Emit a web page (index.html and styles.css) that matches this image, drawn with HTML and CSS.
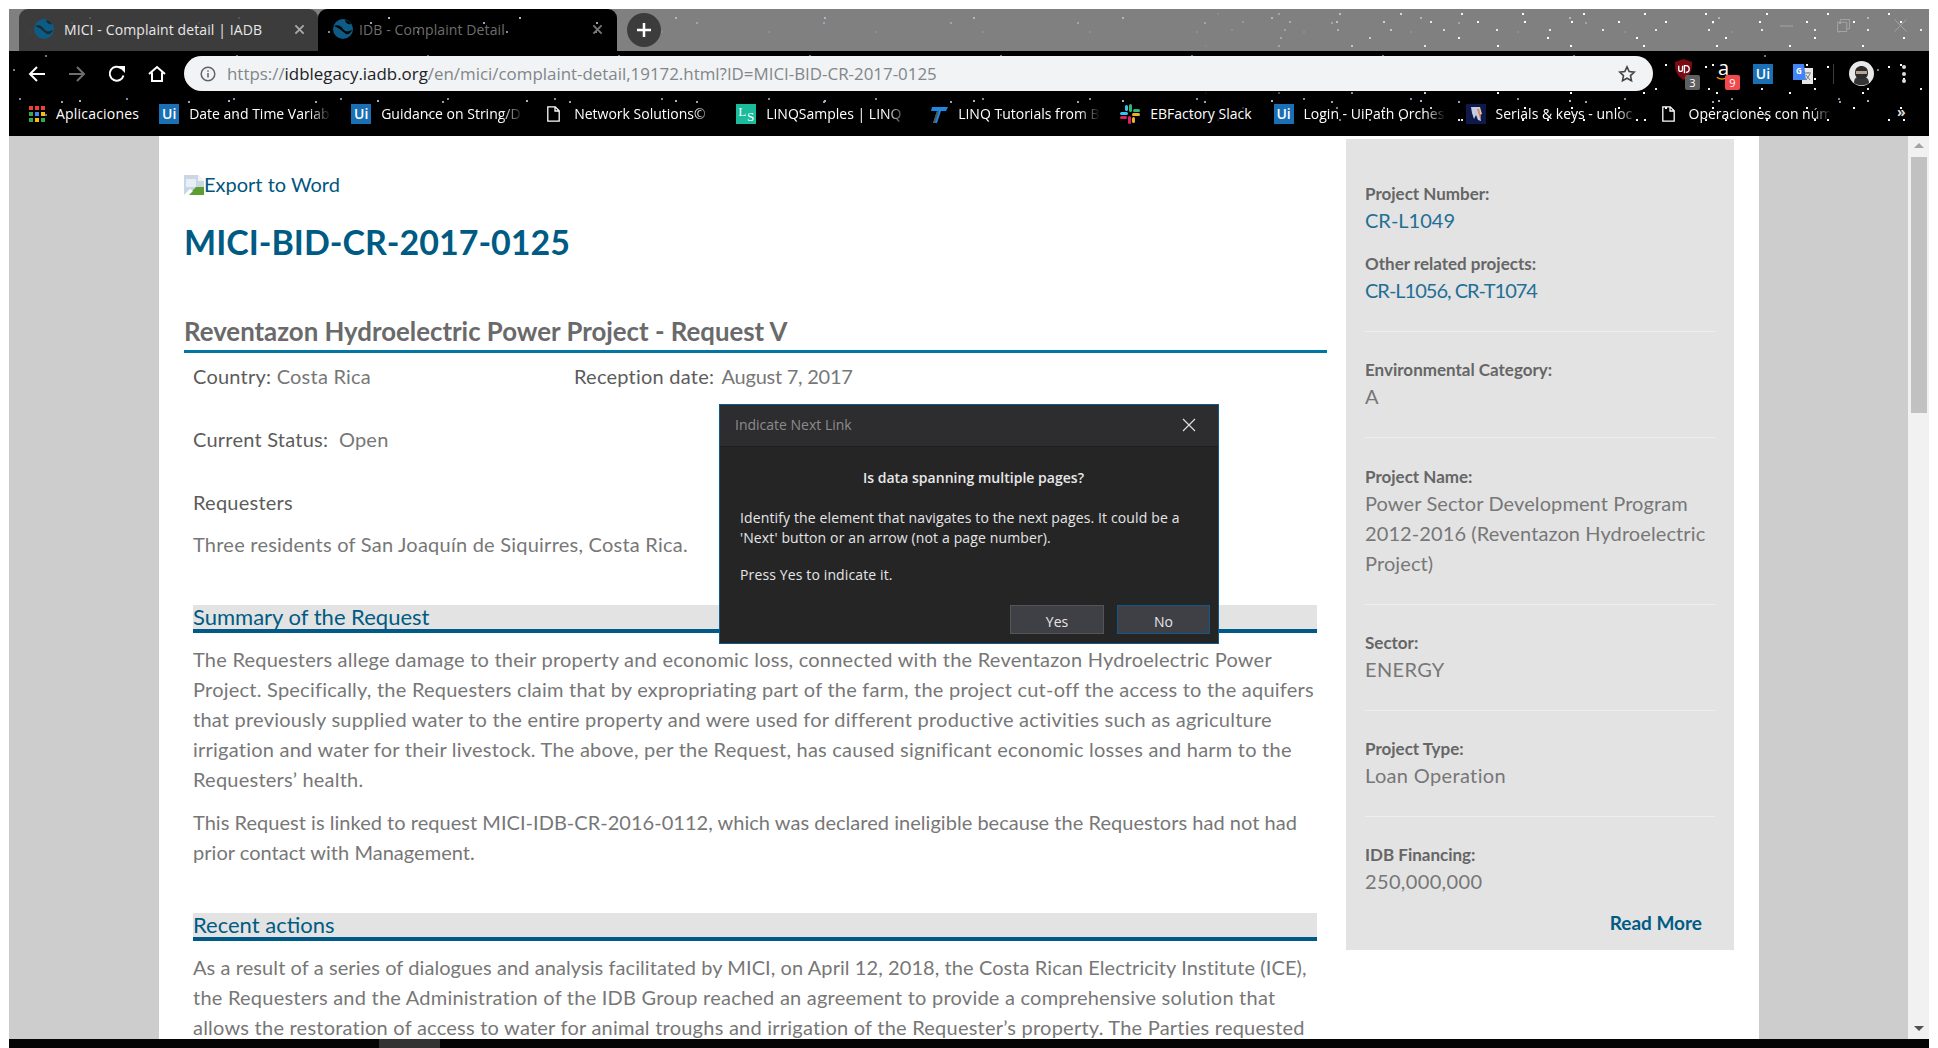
FILE: index.html
```html
<!DOCTYPE html>
<html lang="en">
<head>
<meta charset="utf-8">
<title>MICI - Complaint detail | IADB</title>
<link rel="stylesheet" href="styles.css">
</head>
<body>
<div class="window">
  <header class="chrome stars">
    <div class="dense"></div>
    <div class="tabstrip">
      <div class="tab tab-bg stars">
        <svg class="favicon" viewBox="0 0 20 20"><circle cx="10" cy="10" r="10" fill="#0d5c86"/><path d="M1 7c4-2 7 0 9 3s5 3 9 1c-1 3-4 5-6 4-3-2-5-5-12-8zM12 1c2 0 4 1 6 4-2 1-5 0-6-4z" fill="#1d2b33"/></svg>
        <span class="tab-title">MICI - Complaint detail | IADB</span>
        <svg class="tab-x" viewBox="0 0 12 12"><path d="M1.5 1.5l9 9M10.5 1.5l-9 9"/></svg>
      </div>
      <div class="tab tab-active stars">
        <svg class="favicon" viewBox="0 0 20 20"><circle cx="10" cy="10" r="10" fill="#0d5c86"/><path d="M1 7c4-2 7 0 9 3s5 3 9 1c-1 3-4 5-6 4-3-2-5-5-12-8zM12 1c2 0 4 1 6 4-2 1-5 0-6-4z" fill="#000"/></svg>
        <span class="tab-title dim">IDB - Complaint Detail</span>
        <svg class="tab-x" viewBox="0 0 12 12"><path d="M1.5 1.5l9 9M10.5 1.5l-9 9"/></svg>
      </div>
      <div class="newtab"><svg viewBox="0 0 16 16"><path d="M8 1v14M1 8h14"/></svg></div>
      <div class="winctl">
        <svg class="w-min" viewBox="0 0 13 2"><path d="M0 1h13"/></svg>
        <svg class="w-max" viewBox="0 0 14 14"><path d="M.5 3.5h10v10H.5zM3.5 3V.5h10v10H11"/></svg>
        <svg class="w-close" viewBox="0 0 14 14"><path d="M.5.5l13 13M13.5.5l-13 13"/></svg>
      </div>
    </div>
    <div class="toolbar">
      <div class="navbtn"><svg viewBox="0 0 18 18"><path class="w" d="M17 9H2M9 2L2 9l7 7"/></svg></div>
      <div class="navbtn"><svg viewBox="0 0 18 18"><path class="g" d="M1 9h15M9 2l7 7-7 7"/></svg></div>
      <div class="navbtn"><svg viewBox="0 0 18 18"><path class="w" d="M15.5 10.5A7 7 0 1 1 13.5 3.5"/><path class="wf" d="M10 1h7v7z"/></svg></div>
      <div class="navbtn"><svg viewBox="0 0 18 18"><path class="w" d="M1 9l8-7 8 7M4 7.5V16h10V7.5"/></svg></div>
      <div class="urlbar">
        <svg class="info" viewBox="0 0 16 16"><circle cx="8" cy="8" r="6.8"/><path d="M8 7v4.5M8 4.2v1.6"/></svg>
        <span class="url"><span class="url-dim">https://</span>idblegacy.iadb.org<span class="url-dim">/en/mici/complaint-detail,19172.html?ID=MICI-BID-CR-2017-0125</span></span>
        <svg class="bookmark-star" viewBox="0 0 18 18"><path d="M9 1.8l2.2 4.7 5.1.6-3.8 3.5 1 5.1L9 13.2l-4.5 2.5 1-5.1L1.7 7.100l5.100-.6z"/></svg>
      </div>
      <div class="exts">
        <div class="ext ublock">
          <svg viewBox="0 0 20 22"><path d="M10 0l9 3c0 8-1 14-9 19C2 17 1 11 1 3z" fill="#7a0b12"/><path d="M5 7v4a2 2 0 0 0 4 0V7M11 15V7h1.500a3 3 0 0 1 0 7" fill="none" stroke="#fff" stroke-width="1.400"/></svg>
          <span class="badge badge-gray">3</span>
        </div>
        <div class="ext amazon">
          <span class="amazon-a">a</span>
          <svg class="amazon-smile" viewBox="0 0 14 5"><path d="M1 1c4 3 8 3 12 0" fill="none" stroke="#f90" stroke-width="1.500"/></svg>
          <span class="badge badge-red">9</span>
        </div>
        <div class="ui-logo">Ui</div>
        <div class="ext translate">
          <svg viewBox="0 0 20 20"><path d="M9 4h11v16H9z" fill="#e8e8e8"/><path d="M12 9h6M15 8v1M13 16l4-6M13 11l4 5" stroke="#777" fill="none"/><path d="M0 0h11l2 16H0z" fill="#4285f4"/><text x="3" y="10" class="gt">G</text></svg>
        </div>
        <div class="sep"></div>
        <div class="avatar">
          <svg viewBox="0 0 25 25"><circle cx="12.500" cy="12.500" r="12.500" fill="#e8e8e8"/><path d="M5 22c0-5 3-7 7-7s8 2 8 7c-4 3-11 3-15 0z" fill="#333"/><path d="M6 12c0-5 3-7 6.500-7S19 7 19 12c0 4-3 6-6.500 6S6 16 6 12z" fill="#2b2b2b"/><path d="M7 10h11v3H7z" fill="#b9a58f"/></svg>
        </div>
        <div class="kebab"><i></i><i></i><i></i></div>
      </div>
    </div>
    <nav class="bookmarks">
      <div class="bm bm-apps">
        <svg class="bm-icon apps" viewBox="0 0 16 16">
          <path fill="#ea4335" d="M0 0h4v4H0zM6 0h4v4H6zM12 0h4v4h-4z"/>
          <path fill="#34a853" d="M0 6h4v4H0z"/><path fill="#4285f4" d="M6 6h4v4H6z"/><path fill="#fbbc05" d="M12 6h4v4h-4z"/>
          <path fill="#34a853" d="M0 12h4v4H0z"/><path fill="#fbbc05" d="M6 12h4v4H6z"/><path fill="#34a853" d="M12 12h4v4h-4z"/>
        </svg>
        <span class="bm-text plain apps-text">Aplicaciones</span>
      </div>
      <div class="bm"><div class="ui-logo">Ui</div><span class="bm-text">Date and Time Variab</span></div>
      <div class="bm"><div class="ui-logo">Ui</div><span class="bm-text">Guidance on String/D</span></div>
      <div class="bm bm-doc"><svg class="doc" viewBox="0 0 13 16"><path d="M.8.800h7.400l4 4V15.200H.8zM8 1v4h4"/></svg><span class="bm-text">Network Solutions©</span></div>
      <div class="bm"><div class="ls-logo"><span>L</span><span class="ls-s">S</span></div><span class="bm-text">LINQSamples | LINQ</span></div>
      <div class="bm"><svg class="bm-icon" viewBox="0 0 20 20"><path d="M4 3h16l-2 4h-5l-4 12H5l4-12H3z" fill="#1e88e5"/><path d="M9 7l-4 12h2l4-12z" fill="#555"/></svg><span class="bm-text">LINQ Tutorials from B</span></div>
      <div class="bm"><svg class="bm-icon" viewBox="0 0 20 20"><rect x="0" y="8" width="8" height="3" rx="1.500" fill="#36c5f0"/><rect x="5" y="1" width="3" height="6" rx="1.500" fill="#36c5f0"/><rect x="9" y="0" width="3" height="8" rx="1.500" fill="#2eb67d"/><rect x="13" y="5" width="7" height="3" rx="1.500" fill="#2eb67d"/><rect x="12" y="9" width="8" height="3" rx="1.500" fill="#ecb22e"/><rect x="12" y="13" width="3" height="6" rx="1.500" fill="#ecb22e"/><rect x="8" y="12" width="3" height="8" rx="1.500" fill="#e01e5a"/><rect x="0" y="12" width="7" height="3" rx="1.500" fill="#e01e5a"/></svg><span class="bm-text plain">EBFactory Slack</span></div>
      <div class="bm"><div class="ui-logo">Ui</div><span class="bm-text">Login - UiPath Orches</span></div>
      <div class="bm"><svg class="bm-icon" viewBox="0 0 20 20"><path d="M0 0h20v20H0z" fill="#101a4a"/><path d="M5 3h9l2 7-2 1 1 6-3-1-2-5-2 4-2-6z" fill="#c5cbe0"/><path d="M11 5l3 9 1-1-2-8z" fill="#e8842c"/></svg><span class="bm-text">Serials &amp; keys - unloc</span></div>
      <div class="bm bm-doc"><svg class="doc" viewBox="0 0 13 16"><path d="M.8.800h7.400l4 4V15.200H.8zM8 1v4h4"/></svg><span class="bm-text">Operaciones con núm</span></div>
      <span class="more">»</span>
    </nav>
  </header>

  <div class="viewport">
    <div class="gutter"></div>
    <main class="page">
      <article class="article">
        <a class="export">
          <svg class="broken" viewBox="0 0 20 20"><path d="M0 0h14l6 6v14H0z" fill="#c9d6e6"/><path d="M14 0l6 6h-6z" fill="#f2f2f2"/><path d="M2 4h10v8H2z" fill="#e9eef5"/><path d="M4 20l8-8 8 0v8z" fill="#5c9e31"/><path d="M0 20l6-6 3 2-4 4z" fill="#fff"/></svg>Export to Word
        </a>
        <h1 class="code">MICI-BID-CR-2017-0125</h1>
        <h2 class="project">Reventazon Hydroelectric Power Project - Request V</h2>
        <div class="body">
          <p class="meta-row"><span class="meta-a"><b>Country:</b> Costa Rica</span><span><b>Reception date:</b> <span class="date">August 7, 2017</span></span></p>
          <p class="meta-row gap"><span><b>Current Status:</b>&nbsp; Open</span></p>
          <p class="meta-row gap"><b>Requesters</b></p>
          <p class="para lead">Three residents of San Joaquín de Siquirres, Costa Rica.</p>
          <h3 class="section">Summary of the Request</h3>
          <p class="para first">The Requesters allege damage to their property and economic loss, connected with the Reventazon Hydroelectric Power<br>Project. Specifically, the Requesters claim that by expropriating part of the farm, the project cut-off the access to the aquifers<br>that previously supplied water to the entire property and were used for different productive activities such as agriculture<br>irrigation and water for their livestock. The above, per the Request, has caused significant economic losses and harm to the<br>Requesters’ health.</p>
          <p class="para next">This Request is linked to request MICI-IDB-CR-2016-0112, which was declared ineligible because the Requestors had not had<br>prior contact with Management.</p>
          <h3 class="section">Recent actions</h3>
          <p class="para first"><span class="fit">As a result of a series of dialogues and analysis facilitated by MICI, on April 12, 2018, the Costa Rican Electricity Institute (ICE),</span><br>the Requesters and the Administration of the IDB Group reached an agreement to provide a comprehensive solution that<br>allows the restoration of access to water for animal troughs and irrigation of the Requester’s property. The Parties requested</p>
        </div>
      </article>
      <aside class="side">
        <div class="group first-group">
          <div class="label">Project Number:</div>
          <div class="value link">CR-L1049</div>
          <div class="label spaced">Other related projects:</div>
          <div class="value link tight">CR-L1056, CR-T1074</div>
        </div>
        <div class="group"><div class="label">Environmental Category:</div><div class="value">A</div></div>
        <div class="group"><div class="label">Project Name:</div><div class="value name">Power Sector Development Program<br>2012-2016 (Reventazon Hydroelectric<br>Project)</div></div>
        <div class="group"><div class="label">Sector:</div><div class="value">ENERGY</div></div>
        <div class="group"><div class="label">Project Type:</div><div class="value">Loan Operation</div></div>
        <div class="group last"><div class="label">IDB Financing:</div><div class="value">250,000,000</div></div>
        <a class="readmore">Read More</a>
      </aside>
    </main>
    <div class="gutter right"></div>
    <div class="scrollbar">
      <span class="arrow up"></span>
      <div class="thumb"></div>
      <span class="arrow down"></span>
    </div>
  </div>

  <footer class="taskbar">
    <div class="task-btn"></div>
    <span class="clock">1:09 PM</span>
  </footer>

  <section class="dialog">
    <div class="dlg-title">
      <span>Indicate Next Link</span>
      <svg viewBox="0 0 14 14"><path d="M1 1l12 12M13 1L1 13"/></svg>
    </div>
    <div class="dlg-body">
      <p class="dlg-head">Is data spanning multiple pages?</p>
      <p class="dlg-text">Identify the element that navigates to the next pages. It could be a<br>'Next' button or an arrow (not a page number).</p>
      <p class="dlg-text press">Press Yes to indicate it.</p>
      <div class="dlg-actions">
        <button class="btn">Yes</button>
        <button class="btn btn-default">No</button>
      </div>
    </div>
  </section>
</div>
</body>
</html>
```

FILE: styles.css
```css
:root {
  --stars:
    radial-gradient(circle at 11px 23px, #7f8fa8 0 .7px, transparent 1.1px),
    radial-gradient(circle at 71px 9px, #a9b6cc 0 .7px, transparent 1.1px),
    radial-gradient(circle at 37px 47px, #66748c 0 .8px, transparent 1.1px),
    radial-gradient(circle at 93px 31px, #c4cfe0 0 .6px, transparent 1px),
    radial-gradient(circle at 5px 61px, #73829b 0 .7px, transparent 1.1px),
    radial-gradient(circle at 53px 14px, #97a5bd 0 .7px, transparent 1.1px);
  --dense:
    radial-gradient(circle at 7px 13px, #fff 0 1px, transparent 1.4px),
    radial-gradient(circle at 29px 5px, #fff 0 .8px, transparent 1.2px),
    radial-gradient(circle at 17px 37px, #fff 0 1px, transparent 1.4px),
    radial-gradient(circle at 43px 21px, #dfe8f5 0 .8px, transparent 1.2px),
    radial-gradient(circle at 3px 29px, #fff 0 .9px, transparent 1.2px),
    radial-gradient(circle at 37px 41px, #fff 0 .8px, transparent 1.2px);
}

* { box-sizing: border-box; }

html, body { margin: 0; padding: 0; height: 1048px; overflow: hidden; background: #fff; }

body { padding: 9px 9px 0; font-family: "Lato", "Open Sans", sans-serif; color: #666; }

p, h1, h2, h3 { margin: 0; font-weight: normal; }

.window { position: relative; width: 1920px; height: 1039px; display: flex; flex-direction: column; overflow: hidden; }

/* browser chrome */
.chrome { position: relative; flex: 0 0 127px; background-color: #000; background-image: var(--stars), linear-gradient(#808080 42px, #000 42px); background-size: 107px 67px, 149px 83px, 191px 59px, 83px 71px, 233px 97px, 127px 79px, 100% 100%; font-family: "Open Sans", "Noto Sans", sans-serif; }

.stars { background-repeat: repeat; }

.dense { position: absolute; left: 1180px; top: 0; right: 0; bottom: 0; background-image: var(--dense); background-size: 47px 43px, 61px 53px, 73px 47px, 53px 59px, 89px 41px, 67px 37px; -webkit-mask-image: linear-gradient(90deg, transparent, #000 300px); mask-image: linear-gradient(90deg, transparent, #000 300px); }

.tabstrip { position: relative; height: 42px; display: flex; align-items: stretch; padding-left: 10px; }

.tab { width: 299px; display: flex; align-items: center; padding-bottom: 2px; border-radius: 9px 9px 0 0; font-size: 14px; color: #e8e8e8; white-space: nowrap; }

.tab-bg { background-color: #3c3c3c; background-image: var(--stars); background-size: 107px 67px, 149px 83px, 191px 59px, 83px 71px, 233px 97px, 127px 79px; background-blend-mode: soft-light; padding-left: 15px; }

.tab-active { background-color: #000; background-image: var(--stars); background-size: 89px 71px, 131px 61px, 173px 53px, 79px 83px, 211px 67px, 113px 59px; padding-left: 15px; }

.favicon { width: 20px; height: 20px; flex: none; }

.tab-title { margin-left: 10px; width: 224.500px; overflow: hidden; letter-spacing: .1px; }

.tab-title.dim { color: #6e6e6e; margin-left: 6px; width: 227.500px; }

.tab-x { width: 11px; height: 11px; flex: none; margin-left: 5px; }

.tab-x path { stroke: #aaa; stroke-width: 2; fill: none; }

.tab-active .tab-x path { stroke: #777; }

.newtab { width: 34px; height: 34px; margin: 4px 0 0 10px; border-radius: 50%; background: #3c3c3c; display: flex; align-items: center; justify-content: center; }

.newtab svg { width: 16px; height: 16px; }

.newtab path { stroke: #fff; stroke-width: 2.5; fill: none; }

.winctl { position: absolute; right: 22px; top: 10px; display: flex; align-items: center; gap: 44px; }

.winctl svg { width: 13px; height: 13px; fill: none; }

.winctl path { stroke: #a6a6a6; stroke-width: 1; }

.w-min { height: 2px !important; }

.toolbar { position: relative; height: 45px; display: flex; align-items: center; padding-left: 8px; }

.navbtn { width: 40px; display: flex; justify-content: center; }

.navbtn svg { width: 18px; height: 18px; }

.navbtn .w { stroke: #fff; stroke-width: 2; fill: none; }

.navbtn .wf { fill: #fff; }

.navbtn .g { stroke: #6f6f6f; stroke-width: 2; fill: none; }

.urlbar { flex: 1; height: 35px; margin-left: 7px; background: #f1f3f4; border-radius: 18px; display: flex; align-items: center; padding: 0 17px 0 16px; }

.info { width: 16px; height: 16px; flex: none; }

.info circle, .info path { fill: none; stroke: #5f6368; stroke-width: 1.500; }

.url { flex: 1; margin-left: 11px; font-family: "Open Sans", sans-serif; font-size: 16.900px; color: #202124; white-space: nowrap; }

.url-dim { color: #80868b; }

.bookmark-star { width: 18px; height: 18px; flex: none; }

.bookmark-star path { fill: none; stroke: #444; stroke-width: 1.600; }

.exts { flex: 0 0 276px; display: flex; align-items: center; padding-left: 21px; }

.ext { position: relative; flex: none; }

.ublock { width: 26px; height: 26px; }

.ublock svg { width: 19px; height: 21px; position: absolute; left: 0; top: -2px; }

.badge { position: absolute; right: 0; bottom: -3px; width: 15px; height: 15px; border-radius: 2px; color: #fff; font-size: 11px; line-height: 15px; text-align: center; }

.badge-gray { background: #5f5f5f; }

.badge-red { background: #f04a50; }

.amazon { width: 24px; height: 26px; margin-left: 16px; }

.amazon-a { position: absolute; left: 2px; top: -6px; color: #fff; font-size: 20px; line-height: 26px; }

.amazon-smile { position: absolute; left: 0; top: 15px; width: 12px; height: 5px; }

.ui-logo { width: 20px; height: 20px; flex: none; background: #1a6fb5; color: #fff; font-family: "Open Sans", sans-serif; font-weight: 600; font-size: 14px; line-height: 20px; text-align: center; }

.exts .ui-logo { margin-left: 13px; }

.translate { width: 20px; height: 20px; margin-left: 20px; }

.translate svg { display: block; width: 20px; height: 20px; }

.gt { fill: #fff; font-size: 8px; font-weight: 700; font-family: "Open Sans", sans-serif; }

.sep { width: 1px; height: 20px; margin-left: 20px; background: #3c3c3c; }

.avatar { width: 25px; height: 25px; margin-left: 15px; }

.avatar svg { display: block; width: 25px; height: 25px; }

.kebab { margin-left: 28px; display: flex; flex-direction: column; gap: 3px; }

.kebab i { width: 4px; height: 4px; border-radius: 50%; background: #ddd; }

.bookmarks { position: relative; height: 40px; display: flex; align-items: center; padding: 0 0 5px 20px; font-size: 14px; color: #fff; white-space: nowrap; }

.bm { display: flex; align-items: center; flex: none; margin-right: 20px; }

.bm-apps { margin-right: 18px; }

.bm-icon { width: 20px; height: 20px; flex: none; }

.apps { width: 16px; height: 16px; }

.bm-text { margin-left: 10px; width: 142px; overflow: hidden; -webkit-mask-image: linear-gradient(90deg, #000 85%, transparent); mask-image: linear-gradient(90deg, #000 85%, transparent); }

.bm-text.plain { width: auto; overflow: visible; margin-right: 2px; -webkit-mask-image: none; mask-image: none; }

.bm-text.apps-text { margin-left: 11px; letter-spacing: .2px; }

.doc { width: 13px; height: 16px; flex: none; margin-right: 4px; }

.doc path { fill: none; stroke: #fff; stroke-width: 1.300; }

.bm-doc { margin-left: 4px; }

.ls-logo { position: relative; width: 20px; height: 20px; flex: none; background: #1abc9c; color: #fff; font-family: "Liberation Serif", serif; font-size: 13px; line-height: 15px; padding-left: 2px; }

.ls-s { position: absolute; right: 2px; bottom: 0; }

.more { position: absolute; left: 1888px; top: 6px; font-size: 14px; font-weight: 700; color: #ddd; }

/* viewport */
.viewport { flex: 1; display: flex; min-height: 0; overflow: hidden; background: #fff; }

.gutter { flex: 0 0 150px; background: #cdcdcd; }

.gutter.right { flex-basis: 149px; }

.page { flex: 0 0 1600px; display: flex; align-items: flex-start; background: #fff; }

.article { width: 1143px; margin-left: 25px; padding-top: 33px; flex: none; }

.export { display: block; height: 30px; line-height: 30px; font-size: 20px; color: #00567e; }

.broken { width: 20px; height: 20px; vertical-align: -3px; }

.code { margin-top: 18px; font-size: 34px; line-height: 50px; font-weight: 700; color: #005b84; }

.project { margin-top: 47px; height: 39px; padding-bottom: 2px; border-bottom: 3px solid #0076a3; font-size: 25.800px; line-height: 34px; font-weight: 700; color: #6a6a6a; }

.body { padding: 8px 10px 0 9px; font-size: 20px; line-height: 30px; color: #777; letter-spacing: .23px; white-space: nowrap; }

.body b { font-weight: 400; color: #5c5c5c; }

.meta-row { display: flex; }

.meta-row.gap { margin-top: 33px; }

.meta-a { width: 381px; }

.date { margin-left: 2px; letter-spacing: -.25px; }

.para.lead { margin-top: 12px; }

.para.first { margin-top: 11px; }

.para.next { margin-top: 13px; letter-spacing: .03px; }

.fit { letter-spacing: .08px; }

.section { margin-top: 46px; height: 28px; background: #e3e3e3; border-bottom: 4px solid #005a87; font-size: 22px; line-height: 23px; letter-spacing: 0; color: #005b84; }

/* side panel */
.side { width: 388px; margin: 3px 0 0 19px; padding: 43px 19px 15px; flex: none; background: #e3e3e3; font-size: 20px; }

.group { padding-bottom: 25px; margin-bottom: 26.250px; border-bottom: 1px solid #eee; }

.group.last { border-bottom: 0; padding-bottom: 0; margin-bottom: 0; }

.label { font-size: 17px; line-height: 24px; font-weight: 700; color: #666; }

.label.spaced { margin-top: 17px; }

.value { margin: -1px 0 1px; font-size: 20px; line-height: 30px; color: #777; letter-spacing: .35px; white-space: nowrap; }

.value.name { letter-spacing: .1px; }

.value.link { color: #1f6f96; letter-spacing: 0; }

.value.tight { letter-spacing: -1px; }

.readmore { display: block; margin: 15px 13px 0 0; height: 24px; line-height: 24px; text-align: right; font-size: 19px; font-weight: 700; color: #005b84; }

.scrollbar { flex: 0 0 21px; position: relative; background: #f1f1f1; padding: 21px 2px 0 3px; }

.thumb { height: 256px; background: #c1c1c1; }

.arrow { position: absolute; left: 6px; width: 0; height: 0; border-left: 5px solid transparent; border-right: 5px solid transparent; }

.arrow.up { top: 7px; border-bottom: 5px solid #a3a3a3; }

.arrow.down { bottom: 8px; border-top: 5px solid #505050; }

.taskbar { flex: 0 0 9px; position: relative; display: flex; background: #050505; overflow: hidden; font-family: "Open Sans", sans-serif; }

.task-btn { width: 61px; height: 9px; margin-left: 370px; background: #333; }

.clock { margin-left: 1358px; padding-top: 6px; font-size: 13px; line-height: 16px; color: #fff; white-space: nowrap; }

/* dialog */
.dialog { position: absolute; left: 710px; top: 395px; width: 500px; height: 240px; display: flex; flex-direction: column; background: #252526; border: 1px solid #0e5a8a; font-family: "Open Sans", "Noto Sans", sans-serif; color: #e6e6e6; }

.dlg-title { flex: 0 0 42px; display: flex; align-items: center; justify-content: space-between; padding: 0 22px 2px 15px; background: #2d2d30; border-bottom: 1px solid #1e1e1e; font-size: 14px; color: #8c8c8c; }

.dlg-title svg { width: 14px; height: 14px; }

.dlg-title path { stroke: #ddd; stroke-width: 1.200; fill: none; }

.dlg-body { flex: 1; padding: 21px 8px 0 20px; position: relative; font-size: 14px; line-height: 20px; letter-spacing: .13px; }

.dlg-head { text-align: center; font-weight: 600; padding-right: 3px; letter-spacing: .03px; color: #e8e8e8; }

.dlg-text { margin-top: 20px; }

.dlg-text.press { margin-top: 17px; }

.dlg-actions { position: absolute; right: 8px; bottom: 9px; display: flex; gap: 13px; }

.btn { width: 94px; height: 29px; padding: 3px 0 0; background: #3f3f46; border: 1px solid #555; color: #e6e6e6; font-family: inherit; font-size: 14px; }

.btn-default { width: 93px; border-color: #0e5a8a; }
```
